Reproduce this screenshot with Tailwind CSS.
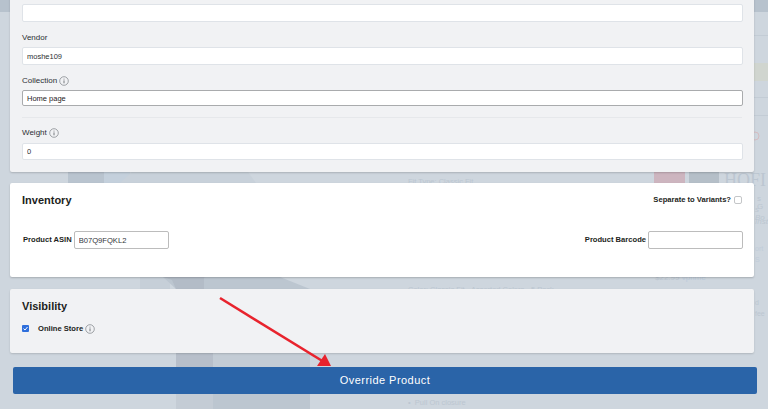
<!DOCTYPE html>
<html lang="en">
<head>
    <meta charset="UTF-8">
    <title>Override Product</title>
    <script src="https://cdn.jsdelivr.net/npm/@tailwindcss/browser@4"></script>
</head>
<body class="bg-[#ced6de] font-['Liberation_Sans',Arial,sans-serif]">
    <div class="relative w-[768px] h-[409px] overflow-hidden bg-[#ced6de]">

        <!-- blurred product page behind the modal -->
        <div class="absolute inset-0 text-[#bcc6d1]">
            <svg class="absolute left-0 top-0" width="768" height="409" viewBox="0 0 768 409">
                <rect x="0" y="0" width="10" height="12" fill="#b7c2cd"/>
                <rect x="754" y="0" width="14" height="12" fill="#b7c2cd"/>
                <rect x="754" y="35" width="14" height="1" fill="#c3ccd5"/>
                <rect x="754" y="63" width="14" height="18" fill="#d0d5cf"/>
                <rect x="754" y="97" width="14" height="1" fill="#c3ccd5"/>
                <rect x="754" y="115" width="14" height="1" fill="#c3ccd5"/>
                <circle cx="755" cy="136" r="4" fill="none" stroke="#d6bcc0" stroke-width="1"/>
                <rect x="68" y="172" width="36" height="11" fill="#b9c4cf"/>
                <rect x="104" y="172" width="26" height="11" fill="#c4d0dc"/>
                <polygon points="120,183 132,172 248,172 256,183" fill="#c8d1da"/>
                <rect x="140" y="277" width="30" height="12" fill="#c6cfd8"/>
                <polygon points="163,277 280,277 310,289 176,289" fill="#bcc6d0"/>
                <polygon points="163,277 206,277 177,285 176,289 172,280" fill="#b3bcc7"/>
                <rect x="176" y="277" width="28" height="12" fill="#b3bcc7"/>
                <rect x="176" y="353" width="37" height="14" fill="#b7bfca"/>
                <rect x="213" y="353" width="97" height="14" fill="#c3ccd5"/>
                <rect x="176" y="394" width="37" height="15" fill="#c4ccd5"/>
                <rect x="213" y="394" width="97" height="15" fill="#bcc6d0"/>
                <rect x="654" y="172" width="31" height="11" fill="#cdb5bf"/>
                <rect x="689" y="172" width="30" height="11" fill="#b5bfc8"/>
            </svg>
            <span class="absolute left-[408px] top-[177px] text-[7.5px] leading-[9px]">Fit Type: Classic Fit</span>
            <span class="absolute left-[724px] top-[170px] text-[18px] leading-[20px] font-['Liberation_Serif',serif]">HOFI</span>
            <span class="absolute left-[757px] top-[195px] text-[8px] leading-[8px]">s G</span>
            <span class="absolute left-[755px] top-[206px] text-[8px] leading-[8px] italic">s Bo</span>
            <span class="absolute left-[755px] top-[218px] text-[8px] leading-[8px] italic">Inst</span>
            <span class="absolute left-[755px] top-[244px] text-[7px] text-[#c0ccd9]">ort S</span>
            <span class="absolute left-[655px] top-[273px] text-[8px] leading-[10px]">$22.99 <span class="text-[#bccbdb]">vprime</span></span>
            <span class="absolute left-[755px] top-[298px] text-[7px]">d fee</span>
            <span class="absolute left-[408px] top-[285px] text-[7.5px] leading-[9px]">Color: Classic Fit - Assorted Colors - 5 Pack</span>
            <span class="absolute left-[408px] top-[397px] text-[7.5px]">•&nbsp; Pull On closure</span>
        </div>

        <!-- red annotation arrow over the page -->
        <svg class="absolute left-0 top-0 z-10" width="768" height="409" viewBox="0 0 768 409">
            <line x1="220" y1="298" x2="324" y2="362" stroke="#e8232d" stroke-width="2.6"/>
            <polygon points="331,366 317,366 325,354" fill="#e8232d"/>
        </svg>

        <div class="relative flex flex-col w-[744px] ml-[10px] -mt-[20px]">
            <!-- details card -->
            <section class="h-[192px] px-[12px] pt-[24px] bg-[#f1f2f4] rounded-[2px] shadow-[0_1px_2px_rgba(0,0,0,0.18)]">
                <input type="text" class="block w-[721px] h-[18px] px-[5px] bg-white border border-[#dfe3e8] rounded-[2px] text-[7.5px]">
                <label class="block mt-[10px] mb-[3px] text-[8px] leading-[12px] text-[#2c2f33]">Vendor</label>
                <input type="text" value="moshe109" class="block w-[721px] h-[18px] px-[4px] bg-white border border-[#dfe3e8] rounded-[2px] text-[7.5px] text-[#2c2f33]">
                <label class="flex items-center gap-[2px] mt-[10px] mb-[3px] text-[8px] leading-[12px] text-[#2c2f33]">Collection
                    <svg width="10" height="10" viewBox="0 0 10 10" fill="none" stroke="#666b70" stroke-width="0.6"><circle cx="5" cy="5" r="4.3"/><path d="M5 4.4V7.3M5 2.7V3.5" stroke-width="0.9"/></svg>
                </label>
                <input type="text" value="Home page" class="block w-[721px] h-[16px] px-[4px] bg-white border border-[#a9abad] rounded-[2px] text-[7.5px] text-[#1f2124]">
                <hr class="mt-[11px] border-[#e6e8eb]">
                <label class="flex items-center gap-[2px] mt-[9px] mb-[4px] text-[8px] leading-[12px] text-[#2c2f33]">Weight
                    <svg width="10" height="10" viewBox="0 0 10 10" fill="none" stroke="#666b70" stroke-width="0.6"><circle cx="5" cy="5" r="4.3"/><path d="M5 4.4V7.3M5 2.7V3.5" stroke-width="0.9"/></svg>
                </label>
                <input type="text" value="0" class="block w-[721px] h-[17px] px-[4px] bg-white border border-[#dfe3e8] rounded-[2px] text-[7.5px] text-[#2c2f33]">
            </section>

            <!-- inventory card -->
            <section class="h-[94px] mt-[11px] px-[12px] pt-[11px] bg-white rounded-[2px] shadow-[0_1px_2px_rgba(0,0,0,0.2)]">
                <div class="flex items-center justify-between h-[12px]">
                    <h2 class="text-[11px] font-bold text-[#1c1e21]">Inventory</h2>
                    <label class="flex items-center gap-[3px] text-[7.6px] font-bold text-[#1c1e21]">Separate to Variants?
                        <span class="w-[8px] h-[8px] border border-[#c4c6c8] rounded-[2px] bg-white"></span>
                    </label>
                </div>
                <div class="flex items-center justify-between w-[721px] mt-[25px] pl-[1px]">
                    <div class="flex items-center gap-[2px]">
                        <label class="text-[7.6px] font-bold text-[#1c1e21]">Product ASIN</label>
                        <input type="text" value="B07Q9FQKL2" class="w-[95px] h-[18px] px-[4px] bg-white border border-[#bcbcbc] rounded-[2px] text-[7.6px] text-[#33363a]">
                    </div>
                    <div class="flex items-center gap-[2px]">
                        <label class="text-[7.6px] font-bold text-[#1c1e21]">Product Barcode</label>
                        <input type="text" class="w-[95px] h-[18px] px-[4px] bg-white border border-[#bcbcbc] rounded-[2px] text-[7.6px]">
                    </div>
                </div>
            </section>

            <!-- visibility card -->
            <section class="h-[64px] mt-[12px] px-[12px] pt-[11px] bg-[#f1f2f4] rounded-[2px] shadow-[0_1px_2px_rgba(0,0,0,0.15)]">
                <h2 class="text-[11px] leading-[12px] font-bold text-[#1c1e21]">Visibility</h2>
                <label class="flex items-center mt-[11px] text-[7.6px] font-bold text-[#1c1e21]">
                    <span class="flex items-center justify-center w-[7px] h-[7px] rounded-[1px] bg-[#2e6fdc]">
                        <svg width="7" height="7" viewBox="0 0 7 7" fill="none" stroke="#fff" stroke-width="1"><path d="M1.5 3.6L3 5L5.5 2"/></svg>
                    </span>
                    <span class="ml-[9px]">Online Store</span>
                    <svg class="ml-[2px]" width="10" height="10" viewBox="0 0 10 10" fill="none" stroke="#666b70" stroke-width="0.6"><circle cx="5" cy="5" r="4.3"/><path d="M5 4.4V7.3M5 2.7V3.5" stroke-width="0.9"/></svg>
                </label>
            </section>

            <button class="w-[744px] h-[27px] mt-[14px] ml-[3px] bg-[#2a64a8] rounded-[2px] text-[11px] tracking-[0.45px] text-white">Override Product</button>
        </div>
    </div>
</body>
</html>
